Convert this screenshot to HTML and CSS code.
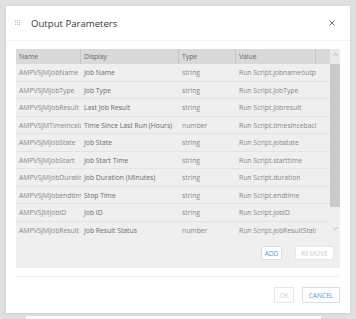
FILE: index.html
```html
<!DOCTYPE html>
<html lang="en">
<head>
  <meta charset="UTF-8">
  <meta name="viewport" content="width=device-width, initial-scale=1.0">
  <title>Output Parameters</title>

  <link rel="stylesheet" href="styles.css">
</head>
<body>
  <div class="dialog">
    <header class="dialog-header">
      <svg class="grip" width="6" height="6" viewBox="0 0 6 6">
        <rect x="0" y="0" width="1" height="1"/><rect x="2" y="0" width="1" height="1"/><rect x="4" y="0" width="1" height="1"/>
        <rect x="0" y="2" width="1" height="1"/><rect x="2" y="2" width="1" height="1"/><rect x="4" y="2" width="1" height="1"/>
        <rect x="0" y="4" width="1" height="1"/><rect x="2" y="4" width="1" height="1"/><rect x="4" y="4" width="1" height="1"/>
      </svg>
      <span class="dialog-title">Output Parameters</span>
      <svg class="close" width="6" height="6" viewBox="0 0 6 6">
        <path d="M0.5 0.5 L5.5 5.5 M5.5 0.5 L0.5 5.5"/>
      </svg>
    </header>

    <div class="panel">
      <div class="grid-wrap">
        <div class="grid">
          <div class="grid-row grid-head">
            <div class="cell">Name</div>
            <div class="cell">Display</div>
            <div class="cell">Type</div>
            <div class="cell">Value</div>
            <div class="cell"></div>
          </div>
          <div class="grid-row"><div class="cell">AMPVSJMJobName</div><div class="cell display">Job Name</div><div class="cell">string</div><div class="cell">Run Script.jobnameoutput</div><div class="cell"></div></div>
          <div class="grid-row"><div class="cell">AMPVSJMJobType</div><div class="cell display">Job Type</div><div class="cell">string</div><div class="cell">Run Script.JobType</div><div class="cell"></div></div>
          <div class="grid-row"><div class="cell">AMPVSJMJobResult</div><div class="cell display">Last Job Result</div><div class="cell">string</div><div class="cell">Run Script.Jobresult</div><div class="cell"></div></div>
          <div class="grid-row"><div class="cell">AMPVSJMTimeincelast</div><div class="cell display">Time Since Last Run (Hours)</div><div class="cell">number</div><div class="cell">Run Script.timesincebackup</div><div class="cell"></div></div>
          <div class="grid-row"><div class="cell">AMPVSJMJobState</div><div class="cell display">Job State</div><div class="cell">string</div><div class="cell">Run Script.jobstate</div><div class="cell"></div></div>
          <div class="grid-row"><div class="cell">AMPVSJMJobStart</div><div class="cell display">Job Start Time</div><div class="cell">string</div><div class="cell">Run Script.starttime</div><div class="cell"></div></div>
          <div class="grid-row"><div class="cell">AMPVSJMJobDuration</div><div class="cell display">Job Duration (Minutes)</div><div class="cell">string</div><div class="cell">Run Script.duration</div><div class="cell"></div></div>
          <div class="grid-row"><div class="cell">AMPVSJMJobendtime</div><div class="cell display">Stop Time</div><div class="cell">string</div><div class="cell">Run Script.endtime</div><div class="cell"></div></div>
          <div class="grid-row"><div class="cell">AMPVSJMJobID</div><div class="cell display">Job ID</div><div class="cell">string</div><div class="cell">Run Script.jobID</div><div class="cell"></div></div>
          <div class="grid-row"><div class="cell">AMPVSJMJobResult</div><div class="cell display">Job Result Status</div><div class="cell">number</div><div class="cell">Run Script.jobResultStatus</div><div class="cell"></div></div>
        </div>

        <div class="scrollbar">
          <div class="scroll-up">
            <svg width="5" height="3" viewBox="0 0 5 3"><path d="M0.5 2.5 L2.5 0.5 L4.5 2.5"/></svg>
          </div>
          <div class="scroll-thumb"></div>
          <div class="scroll-track">
            <svg width="5" height="3" viewBox="0 0 5 3"><path d="M0.5 0.5 L2.5 2.5 L4.5 0.5"/></svg>
          </div>
        </div>
      </div>

      <div class="panel-actions">
        <button class="btn btn-small btn-add">ADD</button>
        <button class="btn btn-small btn-remove" disabled>REMOVE</button>
      </div>
    </div>

    <footer class="dialog-footer">
      <button class="btn btn-ok" disabled>OK</button>
      <button class="btn btn-cancel">CANCEL</button>
    </footer>
  </div>

  <div class="dialog-behind"></div>
</body>
</html>
```

FILE: styles.css
```css
body {
  font-family: "Open Sans", "Liberation Sans", sans-serif;
  margin: 0;
  padding: 6px;
  height: 319px;
  box-sizing: border-box;
  overflow: hidden;
  background-color: #e0e0e0;
  color: #333;
}

/* Dialog */
.dialog {
  width: 344px;
  background: #ffffff;
  box-shadow: 0 1px 3px rgba(0, 0, 0, 0.08);
}

.dialog-header {
  display: flex;
  align-items: center;
  height: 34px;
  padding: 0 15px 0 9px;
  border-bottom: 1px solid #f2f2f2;
}

.grip {
  fill: #b5b5b5;
  margin-right: 10px;
}

.dialog-title {
  font-size: 9.6px;
  color: #3a3a3a;
  flex: 1;
}

.close {
  stroke: #6a6a6a;
  stroke-width: 0.9;
  fill: none;
}

/* Grid panel */
.panel {
  margin: 8px 10px 0;
  background: #efefef;
  padding-bottom: 8px;
}

.grid-wrap {
  display: flex;
  height: 190px;
}

.grid {
  width: 314px;
}

.grid-row {
  display: grid;
  grid-template-columns: 65px 98px 57px 80px 14px;
  height: 17.5px;
  line-height: 17px;
  font-size: 6.8px;
  color: #888888;
  border-bottom: 1px solid #e3e3e3;
  box-sizing: border-box;
}

.grid-row:last-child {
  border-bottom: none;
}

.cell {
  padding-left: 3px;
  white-space: nowrap;
  overflow: hidden;
}

.cell.display {
  color: #6b6b6b;
}

.grid-head {
  height: 15px;
  line-height: 15px;
  background: #d9d9d9;
  color: #6a6a6a;
  border-bottom: none;
}

.grid-head .cell {
  border-right: 1px solid #c6c6c6;
}

.grid-head .cell:last-child {
  border-right: none;
}

.scrollbar {
  width: 10px;
  display: flex;
  flex-direction: column;
}

.scrollbar svg {
  fill: none;
  stroke: #a0a0a0;
  stroke-width: 0.8;
}

.scroll-up {
  height: 15px;
  background: #e9e9e9;
  display: flex;
  justify-content: center;
  padding-top: 4px;
  box-sizing: border-box;
}

.scroll-thumb {
  height: 143px;
  background: #cacaca;
}

.scroll-track {
  flex: 1;
  display: flex;
  justify-content: center;
  padding-top: 20px;
  box-sizing: border-box;
}

.panel-actions {
  display: flex;
  justify-content: flex-end;
  gap: 13px;
  padding: 7px 6px 0 0;
}

/* Buttons */
.btn {
  font-family: "Open Sans", "Liberation Sans", sans-serif;
  font-size: 6.6px;
  background: #ffffff;
  color: #4a9ed6;
  border: 1px solid #dddddd;
  border-radius: 1px;
  padding: 0;
  margin: 0;
  text-align: center;
  box-sizing: border-box;
}

.btn:disabled {
  color: #cdcdcd;
  border-color: #e6e6e6;
}

.btn-small {
  height: 14px;
}

.btn-add {
  width: 21px;
}

.btn-remove {
  width: 39px;
}

.dialog-footer {
  display: flex;
  justify-content: flex-end;
  gap: 8px;
  margin: 8px 10px 0;
  padding: 10px 0;
  border-top: 1px solid #f0f0f0;
}

.btn-ok,
.btn-cancel {
  height: 16px;
}

.btn-ok {
  width: 20px;
}

.btn-cancel {
  width: 38px;
}

.dialog-behind {
  margin: 3px 0 0 20px;
  width: 295px;
  height: 3px;
  background: #ffffff;
}
```
